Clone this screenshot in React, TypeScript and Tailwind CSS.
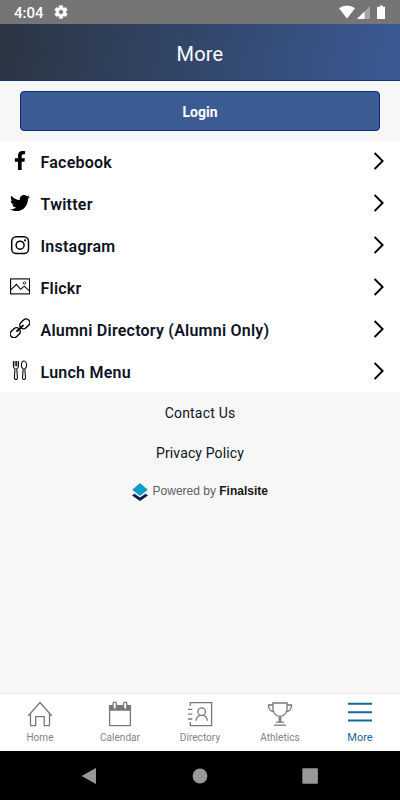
import React from "react";
import { FaFacebookF, FaTwitter } from "react-icons/fa";

const line = { fill: "none", stroke: "currentColor" } as const;

const InstagramIcon = () => (
  <svg className="h-5 w-5" viewBox="0 0 20 20" {...line} strokeWidth="1.5">
    <rect x="1.7" y="1.8" width="16.8" height="16.8" rx="4.6" />
    <circle cx="10.1" cy="10.2" r="4" />
    <circle cx="15" cy="5.3" r="1.1" fill="currentColor" stroke="none" />
  </svg>
);

const PhotoIcon = () => (
  <svg className="h-5 w-5" viewBox="0 0 20 20" {...line} strokeWidth="1.1">
    <rect x="0.6" y="2.9" width="19" height="15" />
    <path d="M.8 13.9 6.4 8.400l4.200 4.900 3.600-3.100 5.200 4.600" />
    <circle cx="14.500" cy="7.100" r="1.200" strokeWidth="0.800" />
  </svg>
);

const LinkIcon = () => (
  <svg className="h-5 w-5" viewBox="0 0 20 20" {...line} strokeWidth="1.400">
    <g transform="rotate(-43 10 10.300)">
      <rect x="-2" y="6.600" width="11" height="7.400" rx="3.700" />
      <rect x="11" y="6.600" width="11" height="7.400" rx="3.700" />
      <path d="M6 10.300h8" strokeWidth="1.900" strokeLinecap="round" />
    </g>
  </svg>
);

const CutleryIcon = () => (
  <svg className="h-5 w-5" viewBox="0 0 20 20" {...line} strokeWidth="1.050" strokeLinejoin="round">
    <path d="M3.400 1v5.200c0 1.400.600 2 1.600 2.600l-.600 9c0 2.300 3 2.300 3 0l-.600-9c1-.600 1.600-1.200 1.600-2.600V1M5.100 1v5.200M6.700 1v5.200" />
    <path d="M14 1c-1.600 0-2.600 2-2.600 4.200 0 1.800.800 3 1.800 3.600l-.700 9c0 2.300 3 2.300 3 0l-.700-9c1-.600 1.800-1.800 1.800-3.600C16.600 3 15.600 1 14 1Z" />
  </svg>
);

const links = [
  { label: "Facebook", icon: <FaFacebookF className="h-[19px] w-5" /> },
  { label: "Twitter", icon: <FaTwitter className="h-5 w-5" /> },
  { label: "Instagram", icon: <InstagramIcon /> },
  { label: "Flickr", icon: <PhotoIcon /> },
  { label: "Alumni Directory (Alumni Only)", icon: <LinkIcon /> },
  { label: "Lunch Menu", icon: <CutleryIcon /> },
];

const HomeIcon = () => (
  <svg className="h-[26px] w-[26px]" viewBox="0 0 26 26" {...line} strokeWidth="1.300">
    <path d="M1.300 14.800 13 1.500l11.700 13.300M3.500 12.400v12.300h5.200v-9h8.500v9h5.300V12.400" />
  </svg>
);

const CalendarIcon = () => (
  <svg className="h-[26px] w-[26px]" viewBox="0 0 26 26" {...line} strokeWidth="1.300">
    <rect x="2.600" y="4.700" width="20.800" height="20" rx="0.600" />
    <path d="M2.600 4.700h20.800v4.300H2.600z" fill="currentColor" />
    <rect x="6" y="1.200" width="3.400" height="7" rx="1.700" fill="white" />
    <rect x="16.500" y="1.200" width="3.400" height="7" rx="1.700" fill="white" />
  </svg>
);

const DirectoryIcon = () => (
  <svg className="h-[26px] w-[26px]" viewBox="0 0 26 26" {...line} strokeWidth="1.300">
    <path d="M3.300 5V1.600h21.300v23H3.300V21M1 8.300h4.300M1 13.200h4.300M1 18h4.300" />
    <circle cx="14.700" cy="10.700" r="3.800" />
    <path d="M9 19.800c.300-3.200 2-4.900 4.300-5.400m2.800 0c2.300.500 4 2.200 4.300 5.400" />
  </svg>
);

const TrophyIcon = () => (
  <svg className="h-[26px] w-[26px]" viewBox="0 0 26 26" {...line} strokeWidth="1.300">
    <path d="M6 2h14v6c0 4-3 7.300-7 7.300S6 12 6 8zM6 4H1.500c0 4 2 6.500 5.800 7M20 4h4.500c0 4-2 6.500-5.800 7M12.300 15.300v5.500h1.400v-5.500M9 21.200h8M7 24.200h12" />
  </svg>
);

const MenuIcon = () => (
  <svg className="h-[26px] w-[26px]" viewBox="0 0 26 26" {...line} strokeWidth="1.900">
    <path d="M1 2.800h24M1 11.200h24M1 19.500h24" />
  </svg>
);

const tabs = [
  { label: "Home", icon: <HomeIcon /> },
  { label: "Calendar", icon: <CalendarIcon /> },
  { label: "Directory", icon: <DirectoryIcon /> },
  { label: "Athletics", icon: <TrophyIcon /> },
  { label: "More", icon: <MenuIcon />, active: true },
];

function StatusBar() {
  return (
    <div className="flex h-6 items-center bg-[#757575] pl-[14px] pr-[14px] text-white">
      <span className="w-[39px] pt-[2px] text-[15px] leading-none font-medium">4:04</span>
      <svg className="h-4 w-4" viewBox="0 0 24 24" fill="currentColor">
        <path d="M19.140 12.940c.040-.300.060-.610.060-.940s-.020-.640-.070-.940l2.030-1.580a.49.49 0 0 0 .120-.610l-1.920-3.320a.49.49 0 0 0-.590-.220l-2.390.960c-.500-.380-1.030-.700-1.620-.940L14.400 2.810a.48.48 0 0 0-.480-.410h-3.840c-.240 0-.430.170-.470.410l-.360 2.540c-.590.240-1.130.570-1.620.940l-2.390-.960a.49.49 0 0 0-.590.220L2.740 8.870a.48.48 0 0 0 .120.610l2.030 1.580a7 7 0 0 0 0 1.880l-2.030 1.580a.49.49 0 0 0-.120.610l1.920 3.320c.120.220.370.290.590.220l2.390-.960c.500.380 1.030.700 1.620.940l.360 2.540c.050.240.240.410.480.410h3.840c.240 0 .440-.170.470-.410l.360-2.540c.590-.240 1.130-.560 1.620-.940l2.390.960c.220.080.470 0 .590-.220l1.920-3.320a.49.49 0 0 0-.120-.610ZM12 15.600a3.600 3.600 0 1 1 0-7.200 3.600 3.600 0 0 1 0 7.200Z" stroke="currentColor" strokeWidth="0.800" />
      </svg>
      <svg className="ml-auto h-4 w-[48px]" viewBox="0 0 48 16" fill="currentColor">
        <path d="M1 4.300a12.500 12.500 0 0 1 16 0L9 14.500Z" />
        <path d="M32 2v13H19z" opacity=".35" />
        <path d="M26.500 7.500V15H19z" />
        <path d="M41 2.700h1V1.500h3v1.200h2V15h-8V2.700z" />
      </svg>
    </div>
  );
}

export default function App() {
  return (
    <div className="flex h-[800px] w-[400px] flex-col overflow-hidden bg-[#f7f7f7] font-['Roboto',sans-serif] text-[#0e1324]">
      <StatusBar />
      <header className="flex h-[57px] items-center justify-center border-b border-[#123574] bg-[linear-gradient(100deg,#2b3442,#3b5a95)] pt-[4px] text-xl tracking-[0.2px] text-white">
        More
      </header>
      <div className="h-[60px] px-5 pt-[10px]">
        <button className="block h-10 w-full rounded-[4px] border border-[#0b2a80] bg-[#3b5b95] pt-[2px] text-sm font-bold text-white">
          Login
        </button>
      </div>
      <nav className="grid h-[251px] grid-rows-6 bg-white">
        {links.map(({ label, icon }) => (
          <a key={label} className="flex items-center pl-[10px] pr-4">
            <span className="mb-[2px] flex h-5 w-5 items-center justify-center text-black">{icon}</span>
            <span className="ml-[10.500px] pt-[3px] text-base leading-5 font-semibold tracking-[0.230px]">{label}</span>
            <svg className="mb-px ml-auto h-[18px] w-[10px] text-black" viewBox="0 0 10 18" {...line} strokeWidth="1.900">
              <path d="m.6 1 8 8-8 8" />
            </svg>
          </a>
        ))}
      </nav>
      <div className="flex flex-col items-center text-sm">
        <a className="flex h-10 items-center pt-[2px] tracking-[0.2px]">Contact Us</a>
        <a className="flex h-10 items-center pt-[2px] tracking-[0.130px]">Privacy Policy</a>
        <div className="flex h-10 items-center gap-[4.500px]">
          <svg className="mb-px h-[18px] w-4" viewBox="0 0 16 18">
            <path d="m0 12.500 2.500-1.700L8 14.500l5.500-3.700 2.500 1.700L8 18z" fill="#0b1b4d" />
            <path d="m8 0 7.800 6.700L8 13 .2 6.700z" fill="#109cc9" />
          </svg>
          <span className="pb-[2px] font-['Liberation_Sans',sans-serif] text-xs text-[#606060]">
            Powered by <b className="text-[#171717]">Finalsite</b>
          </span>
        </div>
      </div>
      <nav className="mt-auto grid h-[58px] grid-cols-5 border-t border-[#e9e9e9] bg-white text-[#77777c]">
        {tabs.map(({ label, icon, active }) => (
          <a key={label} className={active ? "flex flex-col items-center pt-[7px] text-[#126a99]" : "flex flex-col items-center pt-[7px]"}>
            {icon}
            <span className={active ? "mt-1 text-[11px] leading-[14px]" : "mt-1 text-[10px] leading-[14px] tracking-[0.050px] text-[#828286]"}>{label}</span>
          </a>
        ))}
      </nav>
      <footer className="flex h-[49px] items-center justify-center bg-black text-[#999]">
        <svg className="h-4 w-60" viewBox="0 0 240 16" fill="currentColor">
          <path d="M1.500 8 16 0v16z" />
          <circle cx="120" cy="8" r="7.400" />
          <rect x="222.300" y="0.200" width="15.600" height="15.600" rx="1" />
        </svg>
      </footer>
    </div>
  );
}
